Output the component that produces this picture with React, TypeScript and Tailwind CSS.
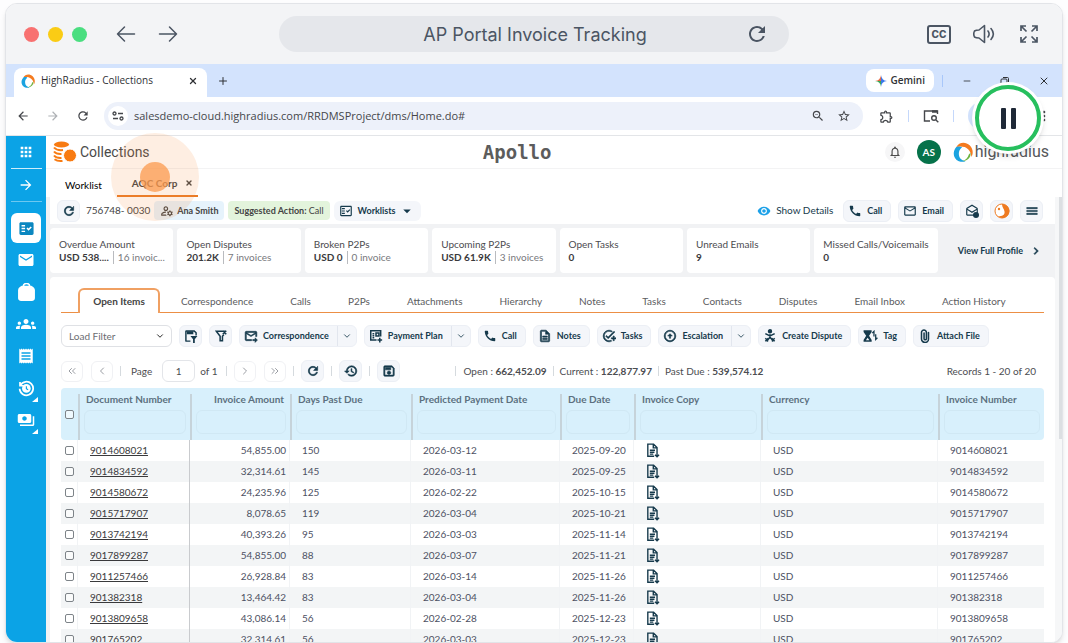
import React from "react";
import type { ReactNode } from "react";
import {
  MdApps, MdArrowForward, MdFactCheck, MdOutlineFactCheck, MdEmail, MdGroups, MdReceipt, MdPayments,
  MdRefresh, MdZoomOut, MdStarBorder, MdOutlineExtension, MdNotificationsNone, MdOutlineManageAccounts,
  MdArrowDropDown, MdVisibility, MdCall, MdOutlineMail, MdMenu, MdChevronRight, MdOutlineForwardToInbox,
  MdOutlineDescription, MdOutlineAddTask, MdOutlineArrowCircleUp, MdOutlineSave, MdHistory, MdMoreVert,
  MdOutlineDrafts, MdArrowBack,
} from "react-icons/md";
import { ChevronDown, ChevronLeft, ChevronRight, ChevronsLeft, ChevronsRight, Minus, X, Plus } from "lucide-react";

const invoices = [
  ["9014608021", "54,855.00", "150", "2026-03-12", "2025-09-20"],
  ["9014834592", "32,314.61", "145", "2026-03-11", "2025-09-25"],
  ["9014580672", "24,235.96", "125", "2026-02-22", "2025-10-15"],
  ["9015717907", "8,078.65", "119", "2026-03-04", "2025-10-21"],
  ["9013742194", "40,393.26", "95", "2026-03-03", "2025-11-14"],
  ["9017899287", "54,855.00", "88", "2026-03-07", "2025-11-21"],
  ["9011257466", "26,928.84", "83", "2026-03-14", "2025-11-26"],
  ["901382318", "13,464.42", "83", "2026-03-04", "2025-11-26"],
  ["9013809658", "43,086.14", "56", "2026-02-28", "2025-12-23"],
  ["901765202", "32,314.61", "56", "2026-03-03", "2025-12-23"],
];

const stats: { label: string; value: string; extra?: string }[] = [
  { label: "Overdue Amount", value: "USD 538....", extra: "16 invoic..." },
  { label: "Open Disputes", value: "201.2K", extra: "7 invoices" },
  { label: "Broken P2Ps", value: "USD 0", extra: "0 invoice" },
  { label: "Upcoming P2Ps", value: "USD 61.9K", extra: "3 invoices" },
  { label: "Open Tasks", value: "0" },
  { label: "Unread Emails", value: "9" },
  { label: "Missed Calls/Voicemails", value: "0" },
];

const sections = [
  "Correspondence", "Calls", "P2Ps", "Attachments", "Hierarchy", "Notes", "Tasks", "Contacts",
  "Disputes", "Email Inbox", "Action History",
];

const columns = [
  "Document Number", "Invoice Amount", "Days Past Due", "Predicted Payment Date", "Due Date",
  "Invoice Copy", "Currency", "Invoice Number",
];

// Material glyphs carry an unfilled bounding path, which must stay without an outline.
const heavyIcon = "size-3.5 [&>path:not([fill=none])]:stroke-1";

function RadiusMark({ className }: { className: string }) {
  return (
    <svg viewBox="0 0 24 24" className={className} aria-hidden="true">
      <path d="M4 6C7 0 15-1 20 4c5 5 4 11 2 14 0-5-3-10-8-12-4-1-7-1-10 0z" fill="#f47b20" />
      <path d="M4 6c-5 6-4 14 3 17 3 1 6 1 8 0-5-1-8-4-8-9 0-3 1-5 4-8-3-1-5-1-7 0z" fill="#1ba3e0" />
      <path d="M21 13c1 6-4 10-10 10 4-1 7-4 8-8z" fill="#6cb33f" />
    </svg>
  );
}

function CoinsIcon() {
  return (
    <svg viewBox="0 0 24 22" className="h-[22px] w-6" aria-hidden="true">
      <ellipse cx="8.500" cy="3.500" rx="7.500" ry="3" fill="#f87b12" />
      <path d="M1 6.500c2 2.500 5 3 9 2.600M1 10.500c1.500 2 4 2.700 7.500 2.500M1 14.500c1.500 2 4 2.700 7.500 2.500M1.500 18.300c2 1.500 5 2 8 1.700" fill="none" stroke="#f87b12" strokeWidth="2" />
      <circle cx="17" cy="14.500" r="6.500" fill="#f87b12" stroke="#fff" strokeWidth="1" />
    </svg>
  );
}

function SaveFilterIcon() {
  return (
    <svg viewBox="0 0 24 24" className="size-3.5" fill="currentColor" aria-hidden="true">
      <path d="M4 2h14l4 4v5h-2.500V7L17 4.500H4.500v15H11V22H4a2 2 0 0 1-2-2V4a2 2 0 0 1 2-2z" />
      <path d="M5 4h11v5H5zM11 12h12l-4.500 5.500V24h-3v-6.500z" />
    </svg>
  );
}

function ClearFilterIcon() {
  return (
    <svg viewBox="0 0 24 24" className="size-3.5" fill="none" stroke="currentColor" strokeWidth="2.600" aria-hidden="true">
      <path d="M13 4H4l6.500 8.500V20h4v-7.500l2.500-3M15 3l6 6M21 3l-6 6M3 4h18" />
    </svg>
  );
}

function PlanIcon() {
  return (
    <svg viewBox="0 0 24 24" className="size-3.5" fill="none" stroke="currentColor" strokeWidth="2.600" aria-hidden="true">
      <path d="M13 19H3V3h17v10M6 8h3M6 11.500h3M6 15h3M12 7h5v5h-5zM18.500 15v8M14.500 19h8" />
    </svg>
  );
}

function DisputeIcon() {
  return (
    <svg viewBox="0 0 24 24" className="size-3.5" fill="none" stroke="currentColor" strokeWidth="2.600" aria-hidden="true">
      <circle cx="12" cy="4" r="2.500" fill="currentColor" />
      <path d="M4 8l8 4 8-4M12 9v6M12 14l-6 7M12 14l6 7M4 16l5 5M9 16l-5 5M15 16l5 5M20 16l-5 5" />
    </svg>
  );
}

function TagIcon() {
  return (
    <svg viewBox="0 0 26 24" className="h-3.5 w-[15px]" fill="currentColor" aria-hidden="true">
      <path d="M1 2h14v3l-4.500 6.500L15 19v3H1v-3l4.500-7.500L1 5z" />
      <path d="M19 13V4l-3 3M22 9v9l3-3" fill="none" stroke="currentColor" strokeWidth="2.200" />
      <path d="M5 19.500h6L8 15z" fill="#f4f6fa" />
    </svg>
  );
}

function ClipIcon() {
  return (
    <svg viewBox="0 0 24 24" className="size-3.5" fill="none" stroke="currentColor" strokeWidth="2.600" strokeLinecap="round" aria-hidden="true">
      <path d="M18 6v11a6 6 0 0 1-12 0V6a4.200 4.200 0 0 1 8.400 0v10.500a2 2 0 0 1-4 0V7" />
    </svg>
  );
}

function CopyIcon() {
  return (
    <svg viewBox="0 0 24 26" className="h-[15px] w-3.5" fill="none" stroke="#163a4c" strokeWidth="2.400" aria-hidden="true">
      <path d="M14 23H3V2h10l6 6v7M12.500 2v6.500H19M6.500 12.500h9M6.500 16h8M6.500 19.300h6M19 15v8M15.500 20.500L19 24l3.500-3.500" />
    </svg>
  );
}

function HistoryDialIcon() {
  return (
    <svg viewBox="0 0 24 24" className="size-[18px]" fill="none" stroke="#fff" strokeWidth="2.300" aria-hidden="true">
      <path d="M4 4v5h5M4.500 8.500A9 9 0 1 1 3.500 13" />
      <circle cx="12.500" cy="12.500" r="5.800" fill="#fff" stroke="none" />
      <path d="M12.500 9.500v3.300l2.300 1.500" stroke="#0ba3e6" strokeWidth="1.500" />
    </svg>
  );
}

function SidebarItem({ label, children, corner = false }: { label: string; children: ReactNode; corner?: boolean }) {
  return (
    <button type="button" aria-label={label} className="relative flex h-8 w-10 items-center justify-center">
      {children}
      {corner && (
        <svg viewBox="0 0 6 5" className="absolute right-2 bottom-0.5 h-[5px] w-1.5" aria-hidden="true">
          <path d="M6 0v5H0z" fill="#fff" />
        </svg>
      )}
    </button>
  );
}

function Sidebar() {
  return (
    <nav aria-label="Modules" className="flex w-10 shrink-0 flex-col items-center bg-[#0ba3e6] text-white">
      <button type="button" aria-label="Apps" className="flex h-[33px] w-[31px] items-center justify-center border-b border-white/80">
        <MdApps className="size-4" />
      </button>
      <button type="button" aria-label="Expand" className="flex h-[33px] w-[31px] items-center justify-center border-b border-white/40">
        <MdArrowForward className="size-4" />
      </button>
      <button type="button" aria-label="Worklist" className="mt-[11px] mb-px flex size-[30px] shrink-0 items-center justify-center rounded-md bg-white text-[#0b87c0]">
        <MdFactCheck className="size-[17px]" />
      </button>
      <SidebarItem label="Mail"><MdEmail className="size-[18px]" /></SidebarItem>
      <SidebarItem label="Portfolio">
        <svg viewBox="0 0 18 18" className="size-[19px]" aria-hidden="true">
          <path d="M6 3a3 2.500 0 0 1 6 0" fill="none" stroke="#fff" strokeWidth="1.500" />
          <path d="M4.500 2.500h9Q17 4 17 7v7q0 3-3 3H4q-3 0-3-3V7q0-3 3.500-4.500z" fill="#fff" />
        </svg>
      </SidebarItem>
      <SidebarItem label="Groups"><MdGroups className="size-5" /></SidebarItem>
      <SidebarItem label="Receipts"><MdReceipt className="size-[18px]" /></SidebarItem>
      <SidebarItem label="History" corner><HistoryDialIcon /></SidebarItem>
      <SidebarItem label="Payments" corner><MdPayments className="size-[18px]" /></SidebarItem>
    </nav>
  );
}

function PlayerBar() {
  return (
    <header className="flex h-[60px] shrink-0 items-center bg-[#f3f4f6] pr-[21px] pl-[18px] text-[#4b5563]">
      <div className="flex gap-[9px]">
        <span className="size-[15px] rounded-full bg-[#f87171]" />
        <span className="size-[15px] rounded-full bg-[#facc15]" />
        <span className="size-[15px] rounded-full bg-[#4ade80]" />
      </div>
      <div className="ml-[27px] flex gap-[18px]">
        <button type="button" aria-label="Back" className="p-px">
          <svg viewBox="0 0 22 22" className="size-[22px]" fill="none" stroke="currentColor" strokeWidth="1.500" strokeLinecap="round" strokeLinejoin="round"><path d="M19.500 11H2.500M9.500 4l-7 7 7 7" /></svg>
        </button>
        <button type="button" aria-label="Forward" className="p-px">
          <svg viewBox="0 0 22 22" className="size-[22px]" fill="none" stroke="currentColor" strokeWidth="1.500" strokeLinecap="round" strokeLinejoin="round"><path d="M2.500 11h17M12.500 4l7 7-7 7" /></svg>
        </button>
      </div>
      <div className="mr-auto ml-[99px] flex h-9 w-[510px] items-center rounded-full bg-[#e5e7eb] pr-5">
        <h1 className="flex-1 pl-[46px] text-center font-['Inter',sans-serif] text-[18px]">AP Portal Invoice Tracking</h1>
        <button type="button" aria-label="Reload"><MdRefresh className="size-6" /></button>
      </div>
      <div className="flex items-center gap-[21px]">
        <button type="button" aria-label="Captions" className="flex h-[19px] w-6 items-center justify-center rounded-[3px] border-2 border-[#4b5563] font-['Inter',sans-serif] text-[10px] font-extrabold">CC</button>
        <button type="button" aria-label="Volume">
          <svg viewBox="0 0 24 22" className="h-[22px] w-6" fill="none" stroke="currentColor" strokeWidth="1.600" strokeLinejoin="round" strokeLinecap="round">
            <path d="M2.500 8C4 7 5.500 7 7 7l5.500-4.500v17L7 15c-1.500 0-3 0-4.500-1-1-2-1-4 0-6zM16 8c1.500 2 1.500 4 0 6M19 5.500c3 3.500 3 7.500 0 11" />
          </svg>
        </button>
        <button type="button" aria-label="Full screen">
          <svg viewBox="0 0 24 24" className="size-6" fill="none" stroke="currentColor" strokeWidth="1.700">
            <path d="M4 9V4h5M15 4h5v5M20 15v5h-5M9 20H4v-5M4 4l5.500 5.500M20 4l-5.500 5.500M20 20l-5.500-5.500M4 20l5.500-5.500" />
          </svg>
        </button>
      </div>
    </header>
  );
}

function BrowserChrome() {
  return (
    <div className="shrink-0 font-['Open_Sans',sans-serif] text-[#2f3135]">
      <div className="flex h-[33px] items-center bg-[#d3e3fd] pr-3 pl-2">
        <div className="flex h-[29px] w-[193px] items-center self-end rounded-t-lg bg-white pr-[9px] pb-1 pl-[7px] text-[10px]">
          <RadiusMark className="size-[14px]" />
          <span className="ml-1.5 flex-1 whitespace-nowrap">HighRadius - Collections</span>
          <button type="button" aria-label="Close tab"><X className="size-2.5" strokeWidth={3} /></button>
        </div>
        <button type="button" aria-label="New tab" className="ml-2.5"><Plus className="size-3" /></button>
        <button type="button" className="mr-2 ml-auto flex h-[23px] items-center gap-1 rounded-lg bg-white px-[9px] text-[10px] font-semibold">
          <svg viewBox="0 0 24 24" className="size-3" aria-hidden="true">
            <path d="M12 0Q11 11 0 12h12z" fill="#e9673f" /><path d="M0 12Q11 13 12 24V12z" fill="#37a757" />
            <path d="M12 0Q13 11 24 12 13 13 12 24z" fill="#3b78ea" />
          </svg>
          Gemini
        </button>
        <span className="mr-[19px] h-3 w-px bg-[#a8c7fa]" />
        <button type="button" aria-label="Minimize" className="mr-7"><Minus className="size-2.5" /></button>
        <button type="button" aria-label="Restore" className="mr-7">
          <svg viewBox="0 0 10 10" className="size-2.5" fill="none" stroke="currentColor"><rect x="1" y="3" width="6" height="6" rx="1" /><path d="M3 1.500h4.500a1 1 0 0 1 1 1V7" /></svg>
        </button>
        <button type="button" aria-label="Close"><X className="size-3" strokeWidth={2} /></button>
      </div>
      <div className="flex h-[39px] items-center border-b border-[#e3e5e8] bg-white px-2.5 text-[#45474b]">
        <button type="button" aria-label="Page back"><MdArrowBack className="size-3.5" /></button>
        <button type="button" aria-label="Page forward" className="ml-4 text-[#aeb1b5]"><MdArrowForward className="size-3.5" /></button>
        <button type="button" aria-label="Refresh page" className="ml-4"><MdRefresh className="size-3.5" /></button>
        <div className="ml-3.5 flex h-7 flex-1 items-center rounded-full bg-[#edf1fa] pr-3 pl-1">
          <span className="flex size-5 items-center justify-center rounded-full bg-white">
            <svg viewBox="0 0 12 10" className="h-2.5 w-3" fill="none" stroke="currentColor" strokeWidth="1.300"><circle cx="2.500" cy="2.500" r="1.500" /><path d="M6 2.500h5M1 7.500h5" /><circle cx="9.500" cy="7.500" r="1.500" /></svg>
          </span>
          <input aria-label="Address" readOnly defaultValue="salesdemo-cloud.highradius.com/RRDMSProject/dms/Home.do#" className="ml-1.5 min-w-0 flex-1 bg-transparent text-[11px] outline-none" />
          <button type="button" aria-label="Zoom"><MdZoomOut className="size-3.5" /></button>
          <button type="button" aria-label="Bookmark" className="ml-3"><MdStarBorder className="size-3.5" /></button>
        </div>
        <button type="button" aria-label="Extensions" className="ml-4"><MdOutlineExtension className="size-[15px]" /></button>
        <span className="mx-3.5 h-3 w-px bg-[#c5d8fb]" />
        <button type="button" aria-label="Search labs">
          <svg viewBox="0 0 16 14" className="h-3.5 w-4" fill="none" stroke="currentColor" strokeWidth="1.400"><path d="M7 12H1.500V2h13v3" /><path d="M9 2.500h5.500" strokeWidth="2.500" /><circle cx="11" cy="9" r="2.300" /><path d="M13 11l2.300 2.300" /></svg>
        </button>
        <span className="mx-3.5 h-3 w-px bg-[#c5d8fb]" />
        <span className="mr-1.5 h-7 w-[62px] rounded-full bg-[#d3e3fd]" />
        <button type="button" aria-label="Menu"><MdMoreVert className="size-4" /></button>
      </div>
    </div>
  );
}

function Pill({ icon, children, split = false }: { icon: ReactNode; children: ReactNode; split?: boolean }) {
  return (
    <div className="flex h-[22px] shrink-0 items-center rounded-md border border-[#eceff5] bg-[#f4f6fa] text-[9px] font-bold whitespace-nowrap text-[#163a4c]">
      <button type="button" className="flex h-full items-center gap-[5px] pr-2 pl-1">
        {icon}
        <span>{children}</span>
      </button>
      {split && (
        <button type="button" aria-label="More options" className="flex h-full w-[19px] items-center justify-center border-l border-[#e2e6ee]">
          <ChevronDown className="size-2.5" />
        </button>
      )}
    </div>
  );
}

function IconButton({ label, children }: { label: string; children: ReactNode }) {
  return (
    <button type="button" aria-label={label} className="flex h-[22px] w-[23px] shrink-0 items-center justify-center rounded-md border border-[#eceff5] bg-[#f4f6fa] text-[#163a4c]">
      {children}
    </button>
  );
}

function PageButton({ label, children }: { label: string; children: ReactNode }) {
  return (
    <button type="button" aria-label={label} className="flex h-[21px] w-[22px] shrink-0 items-center justify-center rounded-md border border-[#f0f1f4] text-[#9a9da3]">
      {children}
    </button>
  );
}

function Divider() {
  return <span className="mx-[7px] h-2.5 w-px shrink-0 bg-[#d5dade]" />;
}

function AccountHeader() {
  return (
    <div className="shrink-0 bg-white">
      <div className="flex h-[33px] items-center justify-between border-b border-[#f3f3f4] pr-[13px] pl-[7px]">
        <div className="flex items-center gap-[3px]">
          <CoinsIcon />
          <h2 className="font-['Roboto',sans-serif] text-[14px] text-[#4a4a4a]">Collections</h2>
        </div>
        <span className="font-['DejaVu_Sans_Mono',monospace] text-[19px] font-bold text-[#5c5c5c]">Apollo</span>
        <div className="flex items-center">
          <button type="button" aria-label="Notifications" className="flex size-5 items-center justify-center rounded-full bg-[#f6f6f7] text-[#4b4b4b]"><MdNotificationsNone className="size-3.5" /></button>
          <span className="ml-3 flex size-6 items-center justify-center rounded-full bg-[#06724a] text-[10px] font-bold text-white">AS</span>
          <RadiusMark className="mr-0.5 ml-3 size-5" />
          <span className="font-['Roboto',sans-serif] text-[16px] text-[#56575a]">highradius</span>
        </div>
      </div>
      <div className="flex h-7 items-end pl-[19px]">
        <button type="button" className="h-6 text-black">Worklist</button>
        <div className="relative ml-[15px] flex h-[26px] w-[81px] items-center border-b-2 border-[#e97b26] pl-[15px] text-[#444]">
          <button type="button" className="font-bold whitespace-nowrap">AQC Corp</button>
          <button type="button" aria-label="Close AQC Corp" className="ml-2"><X className="size-2" strokeWidth={4} /></button>
          <span className="pointer-events-none absolute -top-[38px] -left-[6px] flex size-[88px] items-center justify-center rounded-full bg-[#fb8c3c]/15">
            <span className="size-[30px] rounded-full bg-[#fb9a4e]/75" />
          </span>
        </div>
      </div>
    </div>
  );
}

function DetailBar() {
  return (
    <div className="flex h-[27px] shrink-0 items-center bg-white pr-3 pl-[7px] text-[#444]">
      <IconButton label="Reload account"><MdRefresh className={heavyIcon} /></IconButton>
      <span className="ml-1.5 whitespace-nowrap">756748- 0030</span>
      <span className="ml-1 flex h-[19px] items-center gap-[3px] rounded bg-[#e0f0fb]/80 px-1.5 text-[9px] font-bold whitespace-nowrap"><MdOutlineManageAccounts className="size-3.5" />Ana Smith</span>
      <span className="ml-1 flex h-[19px] items-center rounded bg-[#e3f4dc] px-1.5 text-[9px] whitespace-nowrap"><b>Suggested Action:</b>&nbsp;Call</span>
      <button type="button" className="ml-1 flex h-5 items-center rounded-md bg-[#f4f6fa] px-[5px] text-[9px] font-bold text-[#163a4c]"><MdOutlineFactCheck className={heavyIcon} /><span className="ml-[5px]">Worklists</span><MdArrowDropDown className="ml-0.5 size-[18px]" /></button>
      <button type="button" className="mr-2.5 ml-auto flex items-center gap-[5px] whitespace-nowrap text-[#163a4c]"><MdVisibility className="size-3.5 text-[#1da1e8]" />Show Details</button>
      <div className="flex items-center gap-[7px]">
        <Pill icon={<MdCall className="size-3.5" />}>Call</Pill>
        <Pill icon={<MdOutlineMail className="size-3.5" />}>Email</Pill>
        <IconButton label="Open mail">
          <span className="relative"><MdOutlineDrafts className="size-3.5" /><span className="absolute right-0 bottom-0 size-1.5 rounded-full bg-[#163a4c]" /></span>
        </IconButton>
        <IconButton label="Assistant">
          <svg viewBox="0 0 16 16" className="size-4"><circle cx="8" cy="8" r="7" fill="#fff" stroke="#ee7b22" strokeWidth="1" /><path d="M8 1a7 7 0 1 1-4 12.500c5 0 7-2 6.500-5S8 4.500 8 1z" fill="#ee7b22" /><circle cx="5" cy="6" r="1.200" fill="#ee7b22" /></svg>
        </IconButton>
        <IconButton label="Options"><MdMenu className={heavyIcon} /></IconButton>
      </div>
    </div>
  );
}

function Stats() {
  return (
    <div className="flex shrink-0 gap-1 py-1 pr-3">
      {stats.map((s) => (
        <div key={s.label} className="flex h-[45px] flex-1 flex-col justify-center rounded bg-white pl-[9px] leading-[13px] whitespace-nowrap text-[#4c4c4f]">
          <span>{s.label}</span>
          <span className="flex items-center">
            <b className="text-[#3a3a3c]">{s.value}</b>
            {s.extra && <span className="ml-1 border-l border-[#b9bbbf] pl-1 text-[#77787c]">{s.extra}</span>}
          </span>
        </div>
      ))}
      <button type="button" className="ml-4 flex shrink-0 items-center gap-1.5 text-[9px] font-bold whitespace-nowrap text-[#163a4c]">View Full Profile<MdChevronRight className={heavyIcon} /></button>
    </div>
  );
}

function SectionTabs() {
  return (
    <div className="flex items-end whitespace-nowrap text-[#5b5c60]">
      <span className="w-[17px] border-b border-[#ec8f45]" />
      <button type="button" className="h-[25px] w-[82px] rounded-t-md border-x-2 border-t-2 border-[#f0a062] font-bold text-[#444]">Open Items</button>
      <div className="flex h-[23px] flex-1 items-center gap-px border-b border-[#ec8f45] pl-[3px]">
        {sections.map((s) => (
          <button key={s} type="button" className="h-full px-[18px]">{s}</button>
        ))}
      </div>
    </div>
  );
}

function ActionBar() {
  return (
    <div className="mt-3 flex items-center gap-[7px]">
      <div className="relative w-[111px] shrink-0">
        <select aria-label="Load Filter" className="h-[22px] w-full appearance-none rounded-md border border-[#dfe1e5] bg-white pl-[7px] text-[#6b6d72]">
          <option>Load Filter</option>
        </select>
        <ChevronDown className="pointer-events-none absolute top-1.5 right-[7px] size-2.5" />
      </div>
      <IconButton label="Save filter"><SaveFilterIcon /></IconButton>
      <IconButton label="Clear filter"><ClearFilterIcon /></IconButton>
      <Pill split icon={<MdOutlineForwardToInbox className={heavyIcon} />}>Correspondence</Pill>
      <Pill split icon={<PlanIcon />}>Payment Plan</Pill>
      <Pill icon={<MdCall className="size-3.5" />}>Call</Pill>
      <Pill icon={<MdOutlineDescription className={heavyIcon} />}>Notes</Pill>
      <Pill icon={<MdOutlineAddTask className={heavyIcon} />}>Tasks</Pill>
      <Pill split icon={<MdOutlineArrowCircleUp className={heavyIcon} />}>Escalation</Pill>
      <Pill icon={<DisputeIcon />}>Create Dispute</Pill>
      <Pill icon={<TagIcon />}>Tag</Pill>
      <Pill icon={<ClipIcon />}>Attach File</Pill>
    </div>
  );
}

function Pager() {
  return (
    <div className="mt-[13px] flex h-[22px] items-center whitespace-nowrap text-[#4c4d51]">
      <PageButton label="First page"><ChevronsLeft className="size-3" /></PageButton>
      <span className="w-2" />
      <PageButton label="Previous page"><ChevronLeft className="size-3" /></PageButton>
      <Divider />
      <label className="ml-[3px] flex items-center gap-2.5">Page
        <input defaultValue="1" className="h-[22px] w-[33px] rounded-md border border-[#e3e5e9] text-center" />
      </label>
      <span className="mr-0.5 ml-[5px]">of 1</span>
      <Divider />
      <PageButton label="Next page"><ChevronRight className="size-3" /></PageButton>
      <span className="w-2" />
      <PageButton label="Last page"><ChevronsRight className="size-3" /></PageButton>
      <Divider />
      <IconButton label="Refresh list"><MdRefresh className={heavyIcon} /></IconButton>
      <Divider />
      <IconButton label="Change log"><MdHistory className={heavyIcon} /></IconButton>
      <Divider />
      <IconButton label="Save view"><MdOutlineSave className={heavyIcon} /></IconButton>
      <span className="w-12" />
      <Divider />
      <span>Open : <b>662,452.09</b></span>
      <span className="mx-1.5 h-2.5 w-px bg-[#d5dade]" />
      <span>Current : <b>122,877.97</b></span>
      <span className="mx-1.5 h-2.5 w-px bg-[#d5dade]" />
      <span>Past Due : <b>539,574.12</b></span>
      <span className="mr-2 ml-auto">Records 1 - 20 of 20</span>
    </div>
  );
}

function Tick({ label }: { label: string }) {
  return <input type="checkbox" aria-label={label} className="mx-auto block size-[9px] appearance-none rounded-[2px] border border-[#7d8388] bg-white/60" />;
}

function InvoiceTable() {
  return (
    <table className="mt-1.5 w-full table-fixed border-separate border-spacing-0 text-left whitespace-nowrap">
      <colgroup>
        <col className="w-[17px]" /><col className="w-[112px]" /><col className="w-[100px]" /><col className="w-[121px]" /><col className="w-[149px]" />
        <col className="w-[74px]" /><col className="w-[127px]" /><col className="w-[177px]" /><col />
      </colgroup>
      <thead>
        <tr className="bg-[#d8f0fc] text-[#5c7080]">
          <th className="h-[52px] rounded-l p-0"><Tick label="Select all" /></th>
          {columns.map((c, i) => (
            <th key={c} className="p-0 pt-1.5 align-top font-bold last:rounded-r">
              <div className={i === 1 ? "h-[46px] border-l-2 border-[#c6d3da] text-right" : "h-[46px] border-l-2 border-[#c6d3da]"}>
                <div className="h-4 px-[6px] leading-[10px]">{c}</div>
                <div className="mr-1 ml-1 h-6 rounded-md border border-[#d0e8f4]" />
              </div>
            </th>
          ))}
        </tr>
      </thead>
      <tbody className="text-[#4d5163]">
        {invoices.map(([doc, amount, days, predicted, due]) => (
          <tr key={doc} className="even:bg-[#f3f5f6]">
            <td className="h-[21px] border-r border-[#f1f3f5] p-0"><Tick label={"Select " + doc} /></td>
            <td className="border-r border-[#c9cbce] p-0 pl-3"><a href="#invoice" className="text-[#3a3a3c] underline underline-offset-1">{doc}</a></td>
            <td className="border-r border-[#f1f3f5] p-0 pr-[3px] text-right">{amount}</td>
            <td className="border-r border-[#f1f3f5] p-0 pl-3">{days}</td>
            <td className="border-r border-[#f1f3f5] p-0 pl-3">{predicted}</td>
            <td className="border-r border-[#f1f3f5] p-0 pl-3">{due}</td>
            <td className="border-r border-[#f1f3f5] p-0 pl-3"><CopyIcon /></td>
            <td className="border-r border-[#f1f3f5] p-0 pl-3">USD</td>
            <td className="p-0 pl-3">{doc}</td>
          </tr>
        ))}
      </tbody>
    </table>
  );
}

export default function App() {
  return (
    <div className="flex h-screen flex-col overflow-hidden bg-[#fdfdfe] px-[5px] pt-[3px]">
      <div className="relative flex min-h-0 flex-1 flex-col overflow-hidden rounded-xl border border-[#e2e4e8] bg-white shadow-md">
        <PlayerBar />
        <BrowserChrome />
        <div className="flex min-h-0 flex-1 font-['Lato',sans-serif] text-[10px]">
          <Sidebar />
          <main className="flex min-w-0 flex-1 flex-col bg-[#f1f2f4]">
            <AccountHeader />
            <div className="flex min-h-0 flex-1">
              <div className="flex min-w-0 flex-1 flex-col pl-1">
                <DetailBar />
                <Stats />
                <section className="min-h-0 flex-1 overflow-hidden rounded-t bg-white px-[11px] pt-[11px]">
                  <SectionTabs />
                  <ActionBar />
                  <Pager />
                  <InvoiceTable />
                </section>
              </div>
              <div className="w-[7px] shrink-0 bg-[#f6f7f8]">
                <div className="ml-1 h-[242px] w-[3px] bg-[#dcdfe2]" />
              </div>
            </div>
          </main>
        </div>
        <button type="button" aria-label="Pause" className="absolute top-[78px] right-[18px] flex size-[72px] items-center justify-center rounded-full bg-white shadow-md">
          <span className="flex size-[66px] items-center justify-center gap-[5px] rounded-full border-4 border-[#27bf5e] bg-white">
            <span className="h-[21px] w-[5px] rounded-[1px] bg-[#1f2937]" />
            <span className="h-[21px] w-[5px] rounded-[1px] bg-[#1f2937]" />
          </span>
        </button>
      </div>
    </div>
  );
}
